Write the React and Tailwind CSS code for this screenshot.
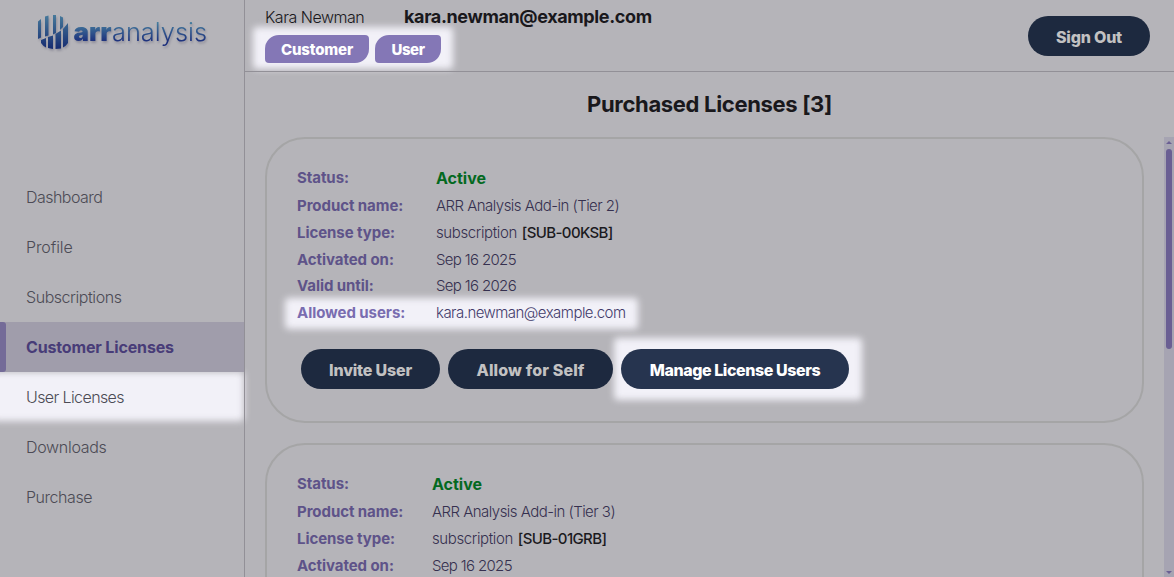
import React from "react";

const navItems = [
  { label: "Dashboard", tracking: "tracking-[-0.53px]" },
  { label: "Profile", tracking: "tracking-[-0.1px]" },
  { label: "Subscriptions", tracking: "tracking-[-0.45px]" },
  { label: "Customer Licenses", tracking: "tracking-[-0.15px]", active: true },
  { label: "User Licenses", tracking: "tracking-[-0.6px]", highlighted: true },
  { label: "Downloads", tracking: "tracking-[-0.3px]" },
  { label: "Purchase", tracking: "tracking-[-0.45px]" },
];

function Glow({ className }) {
  return <span aria-hidden="true" className={`pointer-events-none absolute -z-10 rounded-[4px] bg-[#f2f1f8] blur-[3.5px] ${className}`} />;
}

function Logo() {
  return (
    <svg width="174" height="44" viewBox="0 0 174 44" className="block overflow-visible drop-shadow-[1px_2px_1px_rgba(60,60,90,0.3)]">
      <defs>
        <linearGradient id="mark" x1="0" y1="3" x2="0" y2="38" gradientUnits="userSpaceOnUse">
          <stop offset="0" stopColor="#477a9b" />
          <stop offset="1" stopColor="#13286f" />
        </linearGradient>
        <linearGradient id="word" x1="0" y1="10" x2="0" y2="33" gradientUnits="userSpaceOnUse">
          <stop offset="0" stopColor="#47809f" />
          <stop offset="0.85" stopColor="#1c2f7c" />
        </linearGradient>
      </defs>
      <g fill="url(#mark)">
        <path d="M2 9.500 5 7V25.500L2 27Z" />
        <path d="M9 4.500 12.500 3.500V23.500L9 24.500Z" />
        <path d="M17 3H20V21L17 22.500Z" />
        <path d="M24 4 27 5.500V15L24 18Z" />
        <path d="M5 28 10 26V35.500Q7 34 5 31Z" />
        <path d="M12 25 17 23.500V37L12 36Z" />
        <path d="M19.500 22 25 18.500V36.500L19.500 37Z" />
        <path d="M27 17 32 11V31Q30 34 27 35.500Z" />
      </g>
      <text x="37.500" y="28.500" textLength="38" lengthAdjust="spacingAndGlyphs" fontFamily="Inter, sans-serif" fontSize="25" fontWeight="900" fill="url(#word)">arr</text>
      <text x="76" y="28.500" textLength="95" lengthAdjust="spacingAndGlyphs" fontFamily="Inter, sans-serif" fontSize="25" fontWeight="300" fill="url(#word)">analysis</text>
    </svg>
  );
}

function Sidebar() {
  return (
    <aside className="flex w-[245px] shrink-0 flex-col border-r border-[#929097]">
      <div className="h-[172px] pt-3 pl-9">
        <Logo />
      </div>
      <nav className="flex flex-col">
        {navItems.map((item) => (
          <a
            key={item.label}
            className={`relative flex h-[50px] items-center text-base ${item.tracking} ${
              item.active ? "bg-[#a09dab] font-bold text-[#483c78]" : "font-light text-[#4c4b55]"
            }`}
          >
            {item.highlighted && <Glow className="top-0 bottom-[1px] -left-2 right-0" />}
            <span className={`h-full w-1.5 rounded-r-[3px] ${item.active ? "bg-[#746b98]" : ""}`} />
            <span className="pl-5">{item.label}</span>
          </a>
        ))}
      </nav>
    </aside>
  );
}

function PillButton({ children, className }) {
  return (
    <button className={`flex h-10 shrink-0 items-center justify-center rounded-full pt-0.5 text-base font-extrabold whitespace-nowrap ${className}`}>
      {children}
    </button>
  );
}

function Chip({ children, className }) {
  return (
    <span className={`flex h-7 items-center justify-center rounded-tl-[14px] rounded-tr-[4px] rounded-br-[14px] rounded-bl-[4px] bg-[#8477b6] pt-0.5 text-[15px] font-extrabold text-white ${className}`}>
      {children}
    </span>
  );
}

function Header() {
  return (
    <header className="flex h-[72px] shrink-0 justify-between border-b border-[#929097] pr-6 pl-5">
      <div className="flex flex-col">
        <div className="flex h-[35px] items-center pb-0.5 text-[#19181c]">
          <span className="w-[139px] text-base font-light tracking-[-0.48px]">Kara Newman</span>
          <span className="text-lg font-bold tracking-[-0.38px]">kara.newman@example.com</span>
        </div>
        <div className="relative flex w-[176px] gap-1.5">
          <Glow className="-inset-x-3 -top-2 -bottom-[6px]" />
          <Chip className="w-[104px] tracking-[-0.15px]">Customer</Chip>
          <Chip className="w-[66px] tracking-[-0.4px]">User</Chip>
        </div>
      </div>
      <PillButton className="mt-4 w-[122px] bg-[#1d293f] tracking-[-0.2px] text-[#c2c1c2]">Sign Out</PillButton>
    </header>
  );
}

function Row({ label, labelWidth, glow, height, valueTracking, children }) {
  return (
    <div className={`relative flex w-fit items-center ${height ?? "h-[27px]"}`}>
      {glow && <Glow className="top-[-2px] bottom-[-2px] -left-3 -right-3" />}
      <dt className={`${labelWidth} text-[15px] font-bold tracking-[-0.06px] ${glow ? "text-[#796cb0]" : "text-[#5e5389]"}`}>{label}</dt>
      <dd className={`text-[15px] font-light whitespace-pre ${valueTracking ?? "tracking-[-0.53px]"} ${glow ? "text-[#423b6b]" : "text-[#35304f]"}`}>{children}</dd>
    </div>
  );
}

function LicenseCard({ tier, code, validUntil, users, labelWidth, children }) {
  return (
    <section className="h-[286px] shrink-0 rounded-[40px] border-2 border-[#a5a5a6] pt-[25px] pl-[30px]">
      <dl>
        <Row label="Status:" labelWidth={labelWidth} height="h-[29px] pb-px">
          <span className="text-base font-bold tracking-[0px] text-[#04691f]">Active</span>
        </Row>
        <Row label="Product name:" labelWidth={labelWidth}>ARR Analysis Add-in (Tier {tier})</Row>
        <Row label="License type:" labelWidth={labelWidth}>
          <span className="tracking-[-0.38px]">subscription </span>
          <span className="pl-px font-medium tracking-[-0.62px] text-[#1b1a1e]">[{code}]</span>
        </Row>
        <Row label="Activated on:" labelWidth={labelWidth} height="h-[26px]" valueTracking="tracking-[-0.66px]">Sep 16 2025</Row>
        {validUntil && <Row label="Valid until:" labelWidth={labelWidth} valueTracking="tracking-[-0.66px]">{validUntil}</Row>}
        {users && <Row label="Allowed users:" labelWidth={labelWidth} glow>{users}</Row>}
      </dl>
      {children}
    </section>
  );
}

function LicenseActions() {
  return (
    <div className="mt-[22px] ml-1 flex gap-2">
      <PillButton className="w-[139px] bg-[#1d293f] tracking-[-0.2px] text-[#c2c1c2]">Invite User</PillButton>
      <PillButton className="w-[165px] bg-[#1d293f] tracking-[0.15px] text-[#c2c1c2]">Allow for Self</PillButton>
      <div className="relative">
        <Glow className="-top-[11px] -bottom-[11px] -left-[7px] -right-[13px]" />
        <PillButton className="w-[228px] bg-[#26344f] tracking-[-0.42px] text-white">Manage License Users</PillButton>
      </div>
    </div>
  );
}

function Scrollbar() {
  return (
    <div className="flex w-2.5 shrink-0 flex-col items-center bg-[#a6a4b2]">
      <svg width="10" height="12" viewBox="0 0 10 12"><path d="M2 7 5 4 8 7Z" fill="#6a5f93" /></svg>
      <span className="h-[200px] w-1.5 rounded-full bg-[#6a5f93]" />
      <svg width="10" height="12" viewBox="0 0 10 12" className="mt-auto"><path d="M2 6H8L5 9Z" fill="#6a5f93" /></svg>
    </div>
  );
}

export default function App() {
  return (
    <div className="relative isolate flex h-[577px] w-[1174px] overflow-hidden bg-[#b5b4b9] font-['Inter',sans-serif]">
      <Sidebar />
      <div className="flex min-w-0 flex-1 flex-col">
        <Header />
        <h1 className="flex h-[65px] shrink-0 items-center justify-center text-[22px] font-bold tracking-[-0.33px] text-[#19181c]">Purchased Licenses [3]</h1>
        <div className="flex min-h-0 flex-1">
          <main className="flex min-w-0 flex-1 flex-col gap-5 overflow-hidden pr-5 pl-5">
            <LicenseCard tier={2} code="SUB-00KSB" validUntil="Sep 16 2026" users="kara.newman@example.com" labelWidth="w-[139px]">
              <LicenseActions />
            </LicenseCard>
            <LicenseCard tier={3} code="SUB-01GRB" labelWidth="w-[135px]" />
          </main>
          <Scrollbar />
        </div>
      </div>
    </div>
  );
}
